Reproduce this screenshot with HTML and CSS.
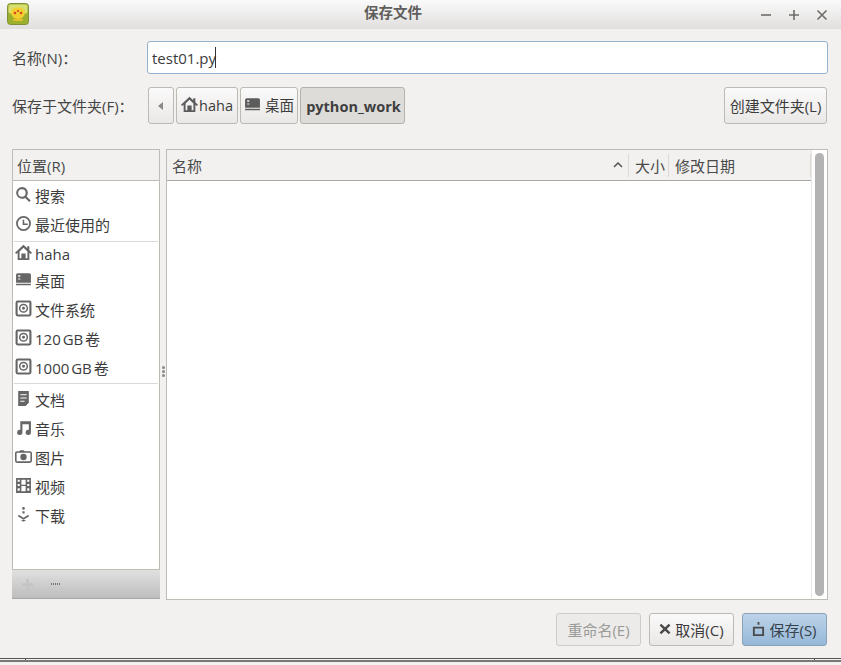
FILE: index.html
```html
<!DOCTYPE html>
<html lang="zh-CN">
<head>
<meta charset="utf-8">
<title>保存文件</title>
<link rel="stylesheet" href="styles.css">
</head>
<body>
<svg class="defs" width="0" height="0">
  <defs>
    <symbol id="i-home" viewBox="0 0 16 16"><path d="M8 .8 0 8.200l1.200 1.300L2.500 8.300V15h11V8.300l1.300 1.200L16 8.200l-2.500-2.300V2h-2v2zM4.300 7 8 3.500 11.700 7v6.300H10V9H6v4.300H4.300z" fill-rule="evenodd"/></symbol>
    <symbol id="i-desk" viewBox="0 0 16 16"><path d="M2.500 2h11A1.500 1.500 0 0 1 15 3.500V11H1V3.500A1.500 1.500 0 0 1 2.500 2zM3 4v1.500h2V4zm0 3v1h2V7zM1 12h14v1.500H1z" fill-rule="evenodd"/></symbol>
    <symbol id="i-disk" viewBox="0 0 16 16"><path d="M2.500 .5h11a2 2 0 0 1 2 2v11a2 2 0 0 1-2 2h-11a2 2 0 0 1-2-2v-11a2 2 0 0 1 2-2zM2.500 2.300v11.400h11V2.300zM8 3.500a4.300 4.300 0 1 1 0 8.600 4.300 4.300 0 0 1 0-8.600zm0 1.400a2.900 2.900 0 1 0 0 5.800 2.900 2.900 0 0 0 0-5.800zm0 1.500a1.400 1.400 0 1 1 0 2.800 1.400 1.400 0 0 1 0-2.800z" fill-rule="evenodd"/></symbol>
  </defs>
</svg>
<div class="window">
  <header class="titlebar">
    <svg class="app-icon" viewBox="0 0 22 22" width="22" height="22">
      <rect x=".5" y=".5" width="21" height="21" rx="3" fill="#9cb02e" stroke="#7f8f3a"/>
      <rect x="1.500" y="1.500" width="19" height="9" rx="2" fill="#d8de70"/>
      <path d="M4 9c0-2.500 3.500-4.500 7-4.500S18 6.500 18 9c0 4-3 7-7 7s-7-3-7-7z" fill="#f2cf2d"/>
      <path d="M3 5c1 2 1 4 2 5L3.500 7z" fill="#f7e88a"/>
      <rect x="6" y="16" width="10" height="2" rx="1" fill="#e6c02a"/>
      <circle cx="8" cy="10" r="1.300" fill="#d8402a"/><circle cx="14" cy="10" r="1.300" fill="#d8402a"/><circle cx="11" cy="8" r="1.100" fill="#d8402a"/>
    </svg>
    <h1 class="title">保存文件</h1>
    <div class="win-controls">
      <svg viewBox="0 0 12 12" width="12" height="12"><path d="M1 6h10" /></svg>
      <svg viewBox="0 0 12 12" width="12" height="12"><path d="M1 6h10M6 1v10" /></svg>
      <svg viewBox="0 0 12 12" width="12" height="12"><path d="M1.500 1.500l9 9M10.500 1.500l-9 9" /></svg>
    </div>
  </header>

  <main class="content">
    <div class="form-row name-row">
      <label class="field-label">名称(N)：</label>
      <div class="entry"><span>test01.py</span><i class="caret"></i></div>
    </div>

    <div class="form-row path-row">
      <span class="field-label">保存于文件夹(F)：</span>
      <div class="path-bar">
        <button class="btn back"><svg viewBox="0 0 6 8" width="6" height="8"><path d="M5 0v8L0 4z"/></svg></button>
        <button class="btn crumb c-home"><svg class="ic-m" width="17" height="17"><use href="#i-home"/></svg><span>haha</span></button>
        <button class="btn crumb c-desk"><svg class="ic-m" width="17" height="17"><use href="#i-desk"/></svg><span>桌面</span></button>
        <button class="btn crumb active">python_work</button>
      </div>
      <button class="btn new-folder">创建文件夹(L)</button>
    </div>

    <div class="panes">
      <aside class="places">
        <div class="column-head places-head">位置(R)</div>
        <ul class="place-list">
          <li class="place"><svg class="ic" viewBox="0 0 16 16" width="17" height="17"><path d="M6.500 1a5.500 5.500 0 0 1 4.400 8.800l3.900 3.900-1.400 1.400-3.900-3.900A5.500 5.500 0 1 1 6.500 1zm0 2a3.500 3.500 0 1 0 0 7 3.500 3.500 0 0 0 0-7z" fill-rule="evenodd"/></svg>搜索</li>
          <li class="place"><svg class="ic" viewBox="0 0 16 16" width="17" height="17"><path d="M8 1a7 7 0 1 1 0 14A7 7 0 0 1 8 1zm0 1.700a5.300 5.300 0 1 0 0 10.600A5.300 5.300 0 0 0 8 2.700zM7.200 4.500h1.500V8H12v1.500H7.200z" fill-rule="evenodd"/></svg>最近使用的</li>
          <li class="sep sep-first"></li>
          <li class="place"><svg class="ic" width="17" height="17"><use href="#i-home"/></svg>haha</li>
          <li class="place tight"><svg class="ic" width="17" height="17"><use href="#i-desk"/></svg>桌面</li>
          <li class="place"><svg class="ic" width="17" height="17"><use href="#i-disk"/></svg>文件系统</li>
          <li class="place vol"><svg class="ic" width="17" height="17"><use href="#i-disk"/></svg>120 GB 卷</li>
          <li class="place vol"><svg class="ic" width="17" height="17"><use href="#i-disk"/></svg>1000 GB 卷</li>
          <li class="sep sep-second"></li>
          <li class="place"><svg class="ic" viewBox="0 0 16 16" width="17" height="17"><path d="M3 1h10v11l-3 3H3zm2 3v1h6V4zm0 3v1h6V7zm0 3v1h4v-1z" fill-rule="evenodd"/></svg>文档</li>
          <li class="place"><svg class="ic" viewBox="0 0 16 16" width="17" height="17"><path d="M5 2h10v10.500a2.500 2.500 0 1 1-2-2.400V5H7v7.500A2.500 2.500 0 1 1 5 10.100z"/></svg>音乐</li>
          <li class="place"><svg class="ic" viewBox="0 0 16 16" width="17" height="17"><path d="M2 3h2l1-1h3l1 1h5a2 2 0 0 1 2 2v7a2 2 0 0 1-2 2H2a2 2 0 0 1-2-2V5a2 2 0 0 1 2-2zm0 1.500a.5.5 0 0 0-.5.500v7a.5.5 0 0 0 .5.500h12a.5.5 0 0 0 .5-.5V5a.5.5 0 0 0-.5-.5zM8 5.500a3 3 0 1 1 0 6 3 3 0 0 1 0-6z" fill-rule="evenodd"/></svg>图片</li>
          <li class="place"><svg class="ic" viewBox="0 0 16 16" width="17" height="17"><path d="M1 1h14v14H1zm1.500 1.500v2h2v-2zm9 0v2h2v-2zm-9 4v2h2v-2zm9 0v2h2v-2zm-9 4v2.500h2v-2.500zm9 0v2.500h2v-2.500zM6 2.500v4.700h4V2.500zm0 6v5h4v-5z" fill-rule="evenodd"/></svg>视频</li>
          <li class="place"><svg class="ic" viewBox="0 0 16 16" width="17" height="17"><path d="M8 1a1.300 1.300 0 1 1 0 2.600A1.300 1.300 0 0 1 8 1zM7 5h2v2H7zM3.500 8.300 8 11l4.500-2.700.8 1.300L8 13 2.700 9.600zM5.500 13.200h5L8 14.800z"/></svg>下载</li>
        </ul>
        <div class="place-tools">
          <svg viewBox="0 0 12 12" width="11" height="11"><path d="M4.500 0h3v4.500H12v3H7.500V12h-3V7.500H0v-3h4.500z"/></svg>
          <span class="dash"></span>
        </div>
      </aside>

      <div class="grip"><i></i><i></i><i></i></div>

      <section class="files">
        <div class="file-main">
          <div class="file-head">
            <div class="column-head col col-name"><span>名称</span><svg viewBox="0 0 10 6" width="10" height="6"><path d="M1 5l4-4 4 4"/></svg></div>
            <div class="column-head col col-size">大小</div>
            <div class="column-head col col-date">修改日期</div>
          </div>
          <div class="file-body"></div>
        </div>
        <div class="scroll"><div class="thumb"></div></div>
      </section>
    </div>

    <footer class="actions">
      <button class="btn act disabled">重命名(E)</button>
      <button class="btn act"><svg class="act-ic" viewBox="0 0 12 12" width="12" height="12"><path d="M2.200 .8 6 4.300 9.800 .8l1.600 1.600L7.800 6l3.600 3.600-1.600 1.600L6 7.700l-3.800 3.500L.6 9.600 4.200 6 .6 2.400z"/></svg>取消(C)</button>
      <button class="btn act primary"><svg class="act-ic" viewBox="0 0 14 16" width="13" height="15"><path d="M6 0h2v3H6zM1 5h12v10H1zm2 2v6h8V7z" fill-rule="evenodd"/></svg>保存(S)</button>
    </footer>
  </main>
  <div class="bottom-edge"></div>
</div>
</body>
</html>
```
FILE: styles.css
```css
* { box-sizing: border-box; }
html, body { margin: 0; padding: 0; }
body {
  width: 841px; height: 665px; overflow: hidden; background: #f2f1f0;
  font: 15px/18px "Open Sans", "Noto Sans CJK SC", sans-serif; color: #3c3c3c;
}
.defs { position: absolute; }
.window { height: 665px; display: flex; flex-direction: column; }
.titlebar {
  height: 29px; flex: none; display: flex; align-items: center; position: relative;
  padding: 0 13px 0 7px;
  background: linear-gradient(#fbfafa, #e0dfde);
}
.app-icon { flex: none; margin-bottom: 2px; }
.title {
  position: absolute; left: 0; right: 55px; top: 3px; margin: 0; text-align: center;
  font-size: 14.5px; line-height: 20px; font-weight: 700; color: #5f5e5c;
}
.win-controls { margin-left: auto; display: flex; gap: 16px; }
.win-controls svg { fill: none; stroke: #6e6d6b; stroke-width: 1.600; }
.content { flex: 1; display: flex; flex-direction: column; padding: 12px 13px 0 12px; min-height: 0; }
.form-row { display: flex; align-items: center; }
.field-label { width: 135px; flex: none; color: #454545; padding-top: 1px; }
.name-row { height: 33px; }
.entry {
  flex: 1; height: 33px; background: #fff; border: 1px solid #96b3ce; border-radius: 3px;
  padding-left: 4px; display: flex; align-items: center;
}
.caret { width: 1px; height: 21px; background: #333; margin-left: -1px; }
.path-row { height: 37px; margin-top: 13px; }
.path-bar { display: flex; gap: 2px; align-items: stretch; margin-right: auto; height: 37px; margin-left: 1px; }
.btn {
  font: inherit; color: #3c3c3c; padding: 1px 0 0; display: flex; align-items: center; justify-content: center;
  border: 1px solid #bdb9b3; border-radius: 3px; background: linear-gradient(#fbfafa, #e9e8e6);
}
.back { width: 26px; }
.back svg { fill: #8a8987; }
.crumb { gap: 1px; font-size: 14.5px; }
.c-home { width: 62px; }
.c-desk { width: 58px; gap: 4px; }
.ic-m { fill: #5c5c5c; flex: none; margin-top: -3px; }
.active { width: 105px; padding: 3px 0 0 2px; font-weight: 700; background: #dedcd9; color: #3f3f3f; border-color: #b5b1ab; font-size: 14.5px; }
.new-folder { width: 103px; height: 37px; margin-right: 1px; }
.panes { display: flex; margin-top: 25px; height: 451px; flex: none; }
.places { width: 148px; height: 450px; flex: none; display: flex; flex-direction: column; background: #fff; }
.column-head { background: #f2f1f0; height: 32px; line-height: 33px; color: #4a4a4a; }
.places-head { border: 1px solid #bfbcb6; padding-left: 4px; }
.place-list {
  list-style: none; margin: 0; padding: 0; flex: 1; border: 1px solid #bfbcb6; border-width: 0 1px;
}
.place { height: 29px; display: flex; align-items: center; padding-left: 2px; gap: 3px; color: #3c3c3c; }
.vol { word-spacing: -2px; }
.tight { margin-top: -2px; }
.ic { fill: #666; flex: none; margin-top: -3px; }
.sep { height: 1px; background: #dcdad8; margin-left: 1px; margin-right: 1px; }
.sep-first { margin-top: 2px; margin-bottom: -3px; }
.sep-second { margin-top: 1px; margin-bottom: 1px; }
.place-tools {
  height: 30px; flex: none; display: flex; align-items: center; padding-left: 10px;
  background: linear-gradient(#e0e0e0, #bdbdbd); border-top: 1px solid #bfbcb6; border-bottom: 1px solid #a9a7a3;
}
.place-tools svg { fill: #c4c4c4; }
.dash { width: 10px; height: 2px; margin-left: 18px; background: repeating-linear-gradient(90deg, #777 0 1px, #ccc 1px 2px); }
.grip { width: 6px; flex: none; display: flex; flex-direction: column; gap: 1px; align-items: center; padding-top: 217px; }
.grip i { width: 3px; height: 3px; border-radius: 50%; background: #8b8a88; }
.files { flex: 1; display: flex; border: 1px solid #bfbcb6; background: #fff; min-width: 0; }
.file-main { flex: 1; display: flex; flex-direction: column; }
.file-head { display: flex; height: 31px; flex: none; border-bottom: 1px solid #aaa8a3; background: #f2f1f0; }
.col { height: 30px; line-height: 33px; padding-left: 5px; position: relative; }
.col::after { content: ""; position: absolute; right: 0; top: 4px; bottom: 3px; width: 1px; background: #dcdad7; }
.col-name { width: 462px; display: flex; justify-content: space-between; align-items: center; padding: 1px 6px 0 5px; line-height: 18px; }
.col-name svg { fill: none; stroke: #555; stroke-width: 1.500; margin-top: -1px; }
.col-size { width: 40px; padding-left: 6px; }
.col-date { flex: 1; padding-left: 6px; }
.file-body { flex: 1; }
.scroll { width: 16px; flex: none; padding: 3px; border-left: 1px solid #e8e7e5; }
.thumb { height: 100%; width: 9px; border-radius: 5px; background: #b3b3b3; }
.actions { display: flex; justify-content: flex-end; gap: 8px; margin-top: 13px; padding-right: 1px; height: 33px; }
.act { width: 85px; height: 33px; gap: 4px; }
.act.disabled { color: #9a9a98; background: #ecebe9; border-color: #cfccc8; }
.act-ic { fill: #4a4a4a; flex: none; margin-top: -2px; }
.primary { background: linear-gradient(#bdd3e8, #96b8d8); border-color: #8aa2b8; color: #37424c; }
.bottom-edge { position: relative; height: 4px; margin-bottom: 3px; flex: none; border-top: 1px solid #555; border-bottom: 2px solid #777; background: #f4f3f2; }
.bottom-edge::before, .bottom-edge::after { content: ""; position: absolute; top: 0; width: 1px; height: 1px; background: #555; }
.bottom-edge::before { left: 25px; }
.bottom-edge::after { left: 814px; }
```
